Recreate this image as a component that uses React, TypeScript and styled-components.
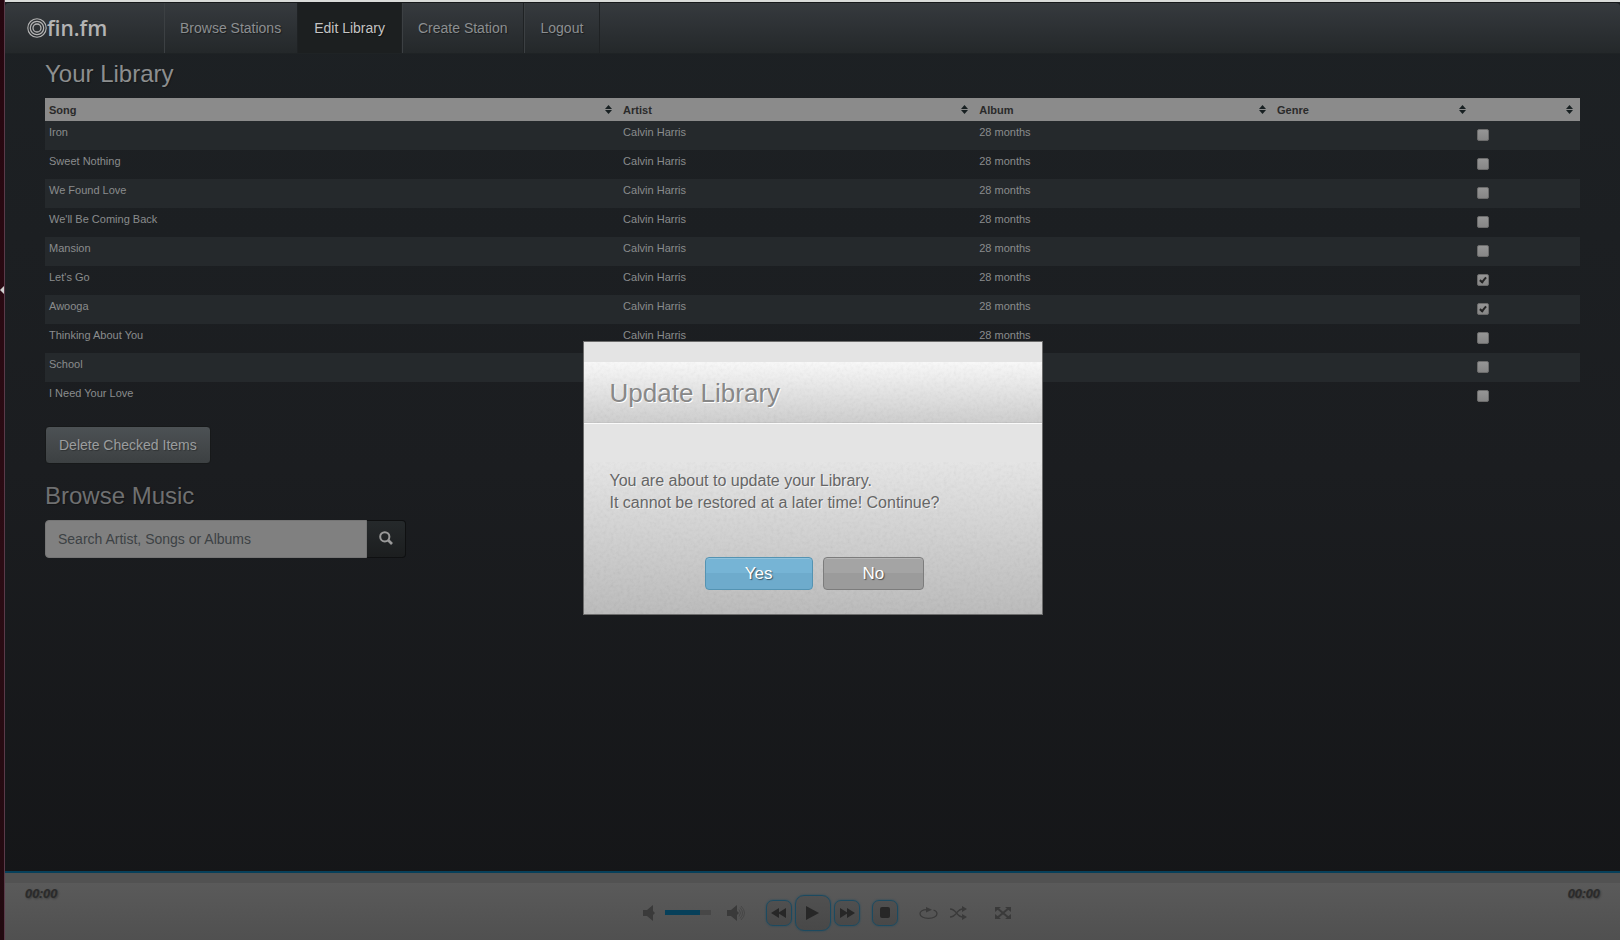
import React, { useState } from 'react';
import styled, { createGlobalStyle, css } from 'styled-components';

const GlobalStyle = createGlobalStyle`
  * { box-sizing: border-box; }
  html, body, #root { height: 100%; }
  body {
    margin: 0;
    font-family: "Liberation Sans", Arial, sans-serif;
    font-size: 14px;
    background: #1b1d1f;
    overflow: hidden;
  }
  button, input { font-family: inherit; margin: 0; }
`;

const Screen = styled.div`
  display: flex;
  height: 100vh;
`;

const DesktopEdge = styled.div`
  flex: none;
  width: 5px;
  display: flex;
  align-items: center;
  background: linear-gradient(#26060f, #2b0c14 60%, #220a10);
  border-right: 1px solid #5a3a49;
`;

const EdgeArrow = styled.svg`
  display: block;
  width: 4px;
  height: 8px;
  margin-bottom: 360px;
`;

const Window = styled.div`
  flex: 1;
  min-width: 0;
  display: flex;
  flex-direction: column;
  border-top: 2px solid #d9dbd9;
  background: linear-gradient(#1d2124, #1b1d20 50%, #141517);
`;

const Navbar = styled.nav`
  display: flex;
  height: 52px;
  border-top: 1px solid #17191b;
  border-bottom: 1px solid #1f2325;
  border-radius: 4px 4px 0 0;
  background: linear-gradient(#363a3e, #2b2f32 60%, #24282a);
`;

const Brand = styled.a`
  display: flex;
  align-items: center;
  width: 159px;
  padding-left: 22px;
  color: #b4b4b4;
  text-decoration: none;
  font: 600 21px/50px "Open Sans", sans-serif;
`;

const BrandMark = styled.svg`
  width: 20px;
  height: 20px;
`;

const NavLink = styled.a<{ $active?: boolean }>`
  padding: 0 16px 0 15px;
  line-height: 50px;
  color: ${p => (p.$active ? '#c4c4c4' : '#8c8f91')};
  text-decoration: none;
  text-shadow: 1px 1px 1px rgba(0, 0, 0, 0.4);
  border-left: 1px solid #3c4043;
  border-right: 1px solid #1f2224;
  ${p => p.$active && css`background: #1c1f20; border-left-color: #1c1f20;`}
`;

const Main = styled.main`
  flex: 1;
  padding: 7px 40px 0;
`;

const Heading = styled.h2`
  margin: 0;
  font-size: 24px;
  font-weight: 400;
  line-height: 26px;
  color: ${p => p.color};
  text-shadow: 1px 1px 1px rgba(0, 0, 0, 0.3);
`;

const SongTable = styled.table`
  width: 100%;
  margin: 11px 0 15px;
  table-layout: fixed;
  border-collapse: collapse;
  font-size: 11px;
`;

const HeadCell = styled.th<{ $width: string }>`
  width: ${p => p.$width};
  height: 23px;
  padding: 0 7px 0 4px;
  background: #8b8b8b;
  color: #2a2a2a;
  text-align: left;
`;

const HeadLabel = styled.span`
  display: flex;
  align-items: center;
  justify-content: space-between;
`;

const SortIcon = styled.svg`
  width: 7px;
  height: 9px;
  margin-left: auto;
`;

const Row = styled.tr`
  height: 29px;
  &:nth-child(odd) { background: #25292c; }
`;

const Cell = styled.td`
  padding: 4px;
  line-height: 14px;
  vertical-align: top;
  color: #8a8c8d;
`;

const Tick = styled.input`
  appearance: none;
  display: grid;
  place-items: center;
  width: 12px;
  height: 12px;
  margin: 4px 0 0;
  border: 1px solid #6c6c6c;
  border-radius: 2px;
  background: linear-gradient(#959595, #868686);
  &:checked::after {
    content: "";
    width: 2px;
    height: 5px;
    margin-bottom: 2px;
    border: solid #242424;
    border-width: 0 2px 2px 0;
    transform: rotate(40deg);
  }
`;

const DeleteButton = styled.button`
  display: block;
  height: 38px;
  padding: 0 13px;
  margin-bottom: 19px;
  border: 1px solid #17191a;
  border-radius: 4px;
  font-size: 14px;
  color: #9b9d9e;
  text-shadow: 1px 1px 1px rgba(0, 0, 0, 0.3);
  background: linear-gradient(#4c5154, #434749 60%, #3c4042);
`;

const SearchForm = styled.form`
  display: flex;
  width: 361px;
  margin-top: 11px;
`;

const SearchInput = styled.input`
  flex: 1;
  min-width: 0;
  height: 38px;
  padding: 0 12px;
  border: 1px solid #757575;
  border-radius: 4px 0 0 4px;
  background: #808080;
  font-size: 14px;
  color: #2a2a2a;
  &::placeholder { color: #3d4245; opacity: 1; }
`;

const SearchButton = styled.button`
  display: grid;
  place-items: center;
  width: 39px;
  padding: 0 0 2px;
  border: 1px solid #0f1011;
  border-left: 0;
  border-radius: 0 4px 4px 0;
  background: linear-gradient(#25292b, #1c1e1f);
`;

const Player = styled.footer`
  display: grid;
  grid-template-columns: 1fr auto 1fr;
  height: 69px;
  border-top: 2px solid #07405a;
  background: linear-gradient(#525252 10px, #5a5a5a 10px, #505050);
`;

const Time = styled.time<{ $end?: boolean }>`
  padding: 11px 20px 0;
  font: italic 700 13px/18px "Open Sans", sans-serif;
  color: #2b2b2b;
  text-align: ${p => (p.$end ? 'right' : 'left')};
  text-shadow: 1px 1px 2px rgba(0, 0, 0, 0.3);
`;

const Controls = styled.div`
  display: flex;
  align-items: center;
  padding: 12px 0 0 28px;
`;

const IconButton = styled.button<{ $gap: number }>`
  padding: 0;
  margin-right: ${p => p.$gap}px;
  border: 0;
  background: none;
  color: #3a3a3a;
  svg { display: block; }
`;

const RoundButton = styled.button<{ $large?: boolean; $gap: number }>`
  display: grid;
  place-items: center;
  width: ${p => (p.$large ? 36 : 26)}px;
  height: ${p => (p.$large ? 36 : 26)}px;
  padding: 0;
  margin-right: ${p => p.$gap}px;
  border: 1px solid #1c4a60;
  border-radius: ${p => (p.$large ? 9 : 7)}px;
  background: linear-gradient(#505050, #484848);
  box-shadow: 0 0 2px #1c4a60;
  color: #272727;
`;

const Volume = styled.div`
  width: 46px;
  height: 5px;
  margin-right: 16px;
  background: #474747;
`;

const VolumeLevel = styled.div`
  width: 78%;
  height: 100%;
  background: #07405a;
`;

const Overlay = styled.div`
  position: fixed;
  inset: 0;
  display: flex;
  align-items: center;
  justify-content: center;
  padding: 16px 0 0 5px;
`;

const Dialog = styled.section`
  position: relative;
  width: 460px;
  padding-top: 20px;
  border: 1px solid #6c6c6c;
  background: #e4e4e4;
  color: #666;
`;

const Textured = styled.div`
  position: relative;
`;

const DialogHeader = styled(Textured)`
  height: 62px;
  padding: 0 26px;
  border-bottom: 1px solid #fafafa;
  box-shadow: inset 0 -1px #c2c2c2;
  background: linear-gradient(#f8f8f8, #cbcbcb);
`;

const DialogTitle = styled.h1`
  position: relative;
  margin: 0;
  font-size: 26px;
  font-weight: 400;
  line-height: 62px;
  color: #888;
  text-shadow: 1px 1px #fff;
`;

const DialogBody = styled(Textured)`
  height: 152px;
  margin-top: 38px;
  padding: 8px 24px 0 26px;
  background: linear-gradient(#e4e4e4, #b8b8b8);
`;

const Message = styled.p`
  position: relative;
  margin: 0 0 43px;
  font-size: 16px;
  line-height: 22px;
  text-shadow: 1px 1px rgba(255, 255, 255, 0.6);
`;

const Actions = styled.div`
  position: relative;
  display: flex;
  justify-content: center;
  gap: 10px;
  padding-left: 2px;
`;

const ActionButton = styled.button<{ $primary?: boolean }>`
  height: 33px;
  padding: 0 39px;
  border: 1px solid ${p => (p.$primary ? '#5493b2' : '#7c7c7c')};
  border-radius: 4px;
  font-size: 17px;
  color: #fff;
  text-shadow: 1px 1px 1px rgba(0, 0, 0, 0.5);
  background: ${p => p.$primary
    ? 'linear-gradient(#76b4d5 50%, #6eabcc 50%)'
    : 'linear-gradient(#a4a4a4 50%, #9b9b9b 50%)'};
  box-shadow: inset 0 1px rgba(255, 255, 255, 0.2);
`;

const Grain = styled.svg`
  position: absolute;
  inset: 0;
  width: 100%;
  height: 100%;
  opacity: 0.06;
`;

function PaperGrain({ id }: { id: string }) {
  return (
    <Grain aria-hidden="true">
      <filter id={id}>
        <feTurbulence type="fractalNoise" baseFrequency="0.3" numOctaves="3" />
        <feColorMatrix type="matrix" values="1.5 0 0 0 0 1.5 0 0 0 0 1.5 0 0 0 0 0 0 0 0 1" />
      </filter>
      <rect width="100%" height="100%" filter={`url(#${id})`} />
    </Grain>
  );
}

const columns = [
  { label: 'Song', width: '37.4%' },
  { label: 'Artist', width: '23.2%' },
  { label: 'Album', width: '19.4%' },
  { label: 'Genre', width: '13%' },
  { label: '', width: '7%' },
];

const songs = [
  'Iron', 'Sweet Nothing', 'We Found Love', "We'll Be Coming Back", 'Mansion',
  "Let's Go", 'Awooga', 'Thinking About You', 'School', 'I Need Your Love',
];

export default function App() {
  const [checked, setChecked] = useState<string[]>(["Let's Go", 'Awooga']);
  const toggle = (song: string) =>
    setChecked(list => (list.includes(song) ? list.filter(s => s !== song) : [...list, song]));

  return (
    <>
      <GlobalStyle />
      <Screen>
        <DesktopEdge>
          <EdgeArrow viewBox="0 0 4 8"><path d="M4 0v8L0 4z" fill="#d0d0d0" /></EdgeArrow>
        </DesktopEdge>
        <Window>
          <Navbar>
            <Brand href="#">
              <BrandMark viewBox="0 0 20 20" fill="none" stroke="currentColor">
                <circle cx="10" cy="10" r="9.2" strokeWidth="1.1" />
                <circle cx="10" cy="10" r="6.7" strokeWidth="1.2" />
                <circle cx="10" cy="10" r="4" strokeWidth="1.3" />
              </BrandMark>
              fin.fm
            </Brand>
            <NavLink href="#">Browse Stations</NavLink>
            <NavLink href="#" $active>Edit Library</NavLink>
            <NavLink href="#">Create Station</NavLink>
            <NavLink href="#">Logout</NavLink>
          </Navbar>
          <Main>
            <Heading color="#8c8e8f">Your Library</Heading>
            <SongTable>
              <thead>
                <tr>
                  {columns.map(c => (
                    <HeadCell key={c.label} $width={c.width}>
                      <HeadLabel>
                        {c.label}
                        <SortIcon viewBox="0 0 7 9" fill="#182022">
                          <path d="M3.5 0L7 4H0zM0 5h7L3.5 9z" />
                        </SortIcon>
                      </HeadLabel>
                    </HeadCell>
                  ))}
                </tr>
              </thead>
              <tbody>
                {songs.map(song => (
                  <Row key={song}>
                    <Cell>{song}</Cell>
                    <Cell>Calvin Harris</Cell>
                    <Cell>28 months</Cell>
                    <Cell />
                    <Cell>
                      <Tick
                        type="checkbox"
                        aria-label={song}
                        checked={checked.includes(song)}
                        onChange={() => toggle(song)}
                      />
                    </Cell>
                  </Row>
                ))}
              </tbody>
            </SongTable>
            <DeleteButton type="button">Delete Checked Items</DeleteButton>
            <Heading color="#6f7071">Browse Music</Heading>
            <SearchForm onSubmit={e => e.preventDefault()}>
              <SearchInput aria-label="Search music" placeholder="Search Artist, Songs or Albums" />
              <SearchButton aria-label="Search">
                <svg width="14" height="14" viewBox="0 0 14 14" fill="none" stroke="#999">
                  <circle cx="5.8" cy="5.8" r="4.6" strokeWidth="2" />
                  <path d="M9 9l4 4" strokeWidth="2.6" />
                </svg>
              </SearchButton>
            </SearchForm>
          </Main>
          <Player>
            <Time>00:00</Time>
            <Controls>
              <IconButton $gap={10} aria-label="Mute">
                <svg width="12" height="16" viewBox="0 0 12 16" fill="currentColor">
                  <path d="M0 5h4l6-5v16l-6-5H0zM10 6l2 2-2 2z" />
                </svg>
              </IconButton>
              <Volume><VolumeLevel /></Volume>
              <IconButton $gap={21} aria-label="Maximum volume">
                <svg width="18" height="16" viewBox="0 0 18 16" fill="currentColor">
                  <path d="M0 5h4l6-5v16l-6-5H0zM10 6l2 2-2 2z" />
                  <g fill="none" stroke="currentColor" opacity="0.55">
                    <path d="M12 4.500q3 3.500 0 7M13 2.500q5 5.500 0 11M14 1q7 7 0 14" />
                  </g>
                </svg>
              </IconButton>
              <RoundButton $gap={3} aria-label="Previous">
                <svg width="16" height="10" viewBox="0 0 16 10" fill="currentColor"><path d="M8 0v10L0 5zM15 0v10L7 5z" /></svg>
              </RoundButton>
              <RoundButton $large $gap={3} aria-label="Play">
                <svg width="13" height="14" viewBox="0 0 13 14" fill="currentColor"><path d="M0 0l13 7-13 7z" /></svg>
              </RoundButton>
              <RoundButton $gap={12} aria-label="Next">
                <svg width="16" height="10" viewBox="0 0 16 10" fill="currentColor"><path d="M1 0v10l8-5zM8 0v10l8-5z" /></svg>
              </RoundButton>
              <RoundButton $gap={21} aria-label="Stop">
                <svg width="10" height="11" viewBox="0 0 10 11" fill="currentColor"><rect width="10" height="11" rx="2" /></svg>
              </RoundButton>
              <IconButton $gap={12} aria-label="Repeat">
                <svg width="19" height="12" viewBox="0 0 19 12" fill="none" stroke="currentColor" strokeWidth="1.3">
                  <path d="M8 2.600C3 2.600 1 4.800 1 6.800C1 9.300 4.500 11.300 9.500 11.300S18 9.300 18 6.800C18 5 16.500 3.600 14.500 3" />
                  <path d="M7 0l6 2.700-6 2.800z" fill="currentColor" stroke="none" />
                </svg>
              </IconButton>
              <IconButton $gap={28} aria-label="Shuffle">
                <svg width="17" height="14" viewBox="0 0 17 14" fill="none" stroke="currentColor" strokeWidth="1.3">
                  <path d="M0 3c7 0 6 8 13 8M0 11c7 0 6-8 13-8" />
                  <path d="M12 0l5 3-5 3zM12 8l5 3-5 3z" fill="currentColor" stroke="none" />
                </svg>
              </IconButton>
              <IconButton $gap={0} aria-label="Full screen">
                <svg width="16" height="12" viewBox="0 0 16 12" fill="currentColor">
                  <path d="M0 0h6L0 5zM16 0v5l-6-5zM0 12V7l6 5zM16 12h-6l6-5z" />
                  <path d="M2 1l12 10M14 1L2 11" stroke="currentColor" strokeWidth="2" />
                </svg>
              </IconButton>
            </Controls>
            <Time $end>00:00</Time>
          </Player>
        </Window>
      </Screen>
      <Overlay>
        <Dialog role="dialog" aria-labelledby="dialog-title">
          <DialogHeader>
            <PaperGrain id="grain-header" />
            <DialogTitle id="dialog-title">Update Library</DialogTitle>
          </DialogHeader>
          <DialogBody>
            <PaperGrain id="grain-body" />
            <Message>
              You are about to update your Library.<br />
              It cannot be restored at a later time! Continue?
            </Message>
            <Actions>
              <ActionButton type="button" $primary>Yes</ActionButton>
              <ActionButton type="button">No</ActionButton>
            </Actions>
          </DialogBody>
        </Dialog>
      </Overlay>
    </>
  );
}
